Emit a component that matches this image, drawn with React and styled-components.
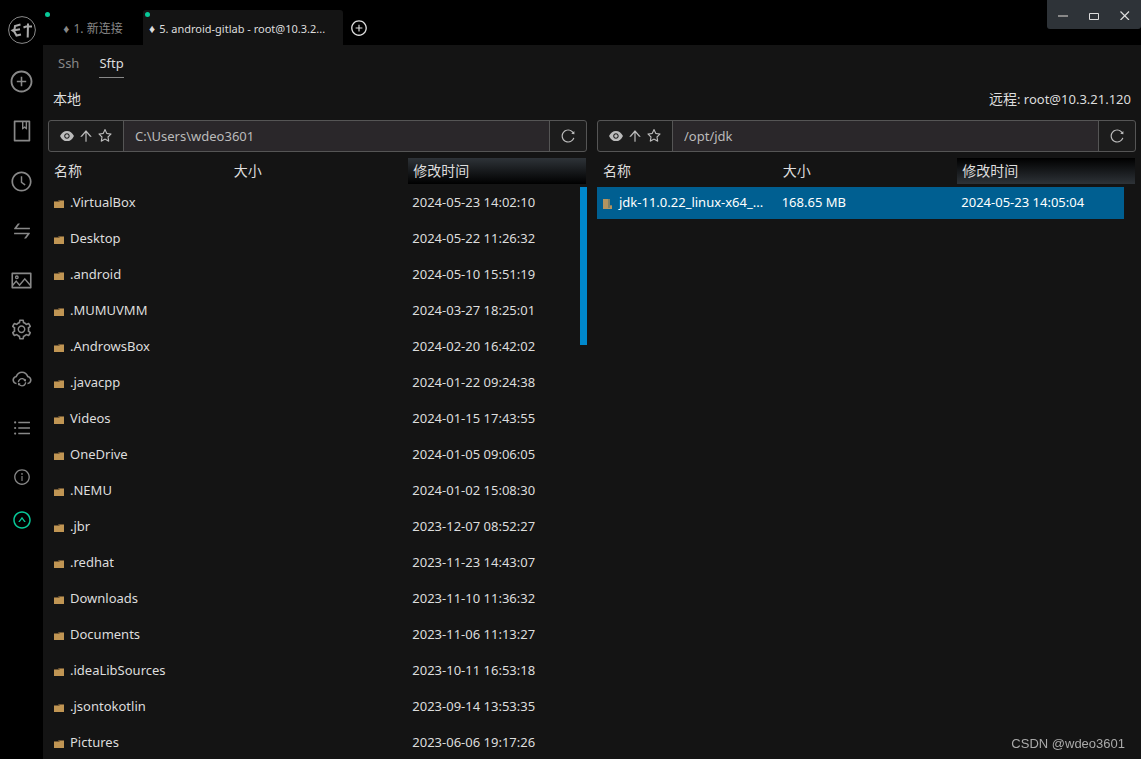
import React from 'react';
import styled, { createGlobalStyle } from 'styled-components';
import {
  AiFillEye,
  AiOutlineArrowUp,
  AiOutlineBook,
  AiOutlineClockCircle,
  AiOutlineCloudSync,
  AiOutlineInfoCircle,
  AiOutlinePicture,
  AiOutlinePlusCircle,
  AiOutlineReload,
  AiOutlineSetting,
  AiOutlineStar,
  AiOutlineSwap,
  AiOutlineUnorderedList,
  AiOutlineUpCircle,
} from 'react-icons/ai';

const GlobalStyle = createGlobalStyle`
  * {
    box-sizing: border-box;
  }

  body {
    margin: 0;
    background: #141414;
    color: #ddd;
    font-family: "Noto Sans", "Noto Sans CJK SC", sans-serif;
    font-size: 13px;
    line-height: 20px;
  }

  button,
  input {
    font: inherit;
    color: inherit;
  }
`;

const Shell = styled.div`
  display: flex;
  height: 100vh;
  overflow: hidden;
`;

const Sidebar = styled.nav`
  flex: none;
  width: 43px;
  display: flex;
  flex-direction: column;
  align-items: center;
  background: #000;
`;

const IconButton = styled.button`
  display: flex;
  align-items: center;
  justify-content: center;
  padding: 0;
  border: none;
  background: none;
  color: ${(props) => props.$color || '#bbb'};
  cursor: pointer;
`;

const LogoLink = styled.a`
  display: flex;
  height: 56px;
  padding-top: 16px;
  color: #888;
`;

const SideButton = styled(IconButton)`
  width: 43px;
  height: ${(props) => props.$height}px;
`;

const Main = styled.main`
  flex: 1;
  min-width: 0;
  display: flex;
  flex-direction: column;
`;

const TopBar = styled.header`
  flex: none;
  display: flex;
  align-items: flex-end;
  height: 45px;
  background: #000;
`;

const Tab = styled.button`
  position: relative;
  width: ${(props) => (props.$active ? 200 : 100)}px;
  height: 35px;
  padding: 2px 6px 0;
  border: none;
  border-radius: 3px 3px 0 0;
  background: ${(props) => (props.$active ? '#141414' : 'none')};
  color: ${(props) => (props.$active ? '#ddd' : '#888')};
  font-size: ${(props) => (props.$active ? 11 : 12)}px;
  text-align: ${(props) => (props.$active ? 'left' : 'center')};
  white-space: nowrap;
  cursor: pointer;
`;

const Diamond = styled.span`
  margin-right: 4px;
  font-family: "Liberation Sans", sans-serif;
  font-size: 12px;
`;

const StatusDot = styled.span`
  position: absolute;
  top: 2px;
  left: 2px;
  width: 5px;
  height: 5px;
  border-radius: 50%;
  background: #08c898;
`;

const AddTab = styled(IconButton)`
  width: 32px;
  height: 35px;
`;

const WindowControls = styled.div`
  display: flex;
  align-self: flex-start;
  margin-left: auto;
  padding-right: 1px;
  border-radius: 0 0 3px 3px;
  background: #2e3338;
`;

const WindowButton = styled(IconButton)`
  width: 31px;
  height: 29px;
`;

const SessionNav = styled.nav`
  display: flex;
  gap: 20px;
  padding: 8px 15px 10px;
`;

const SessionLink = styled.a`
  height: 25px;
  border-bottom: 1px solid ${(props) => (props.$active ? '#888' : 'transparent')};
  color: ${(props) => (props.$active ? '#ddd' : '#888')};
  text-decoration: none;
`;

const Panes = styled.div`
  flex: 1;
  min-height: 0;
  display: grid;
  grid-template-columns: 1fr 1fr;
  gap: 10px;
  padding: 0 5px;
`;

const Pane = styled.section`
  min-width: 0;
  min-height: 0;
  display: flex;
  flex-direction: column;
`;

const PaneTitle = styled.h2`
  height: 22px;
  margin: 0 0 10px;
  padding: 0 5px;
  font-size: 14px;
  font-weight: 400;
  line-height: 22px;
  text-align: ${(props) => props.$align || 'left'};
`;

const Host = styled.span`
  font-size: 13px;
`;

const AddressBar = styled.div`
  flex: none;
  display: flex;
  height: 32px;
  border: 1px solid #555;
  border-radius: 3px;
  background: #1c1c1c;
  overflow: hidden;
`;

const AddressActions = styled.div`
  display: flex;
  align-items: center;
  gap: 3px;
  padding: 0 10px;
`;

const AddressInput = styled.input`
  flex: 1;
  min-width: 0;
  padding: 0 11px;
  border: solid #555;
  border-width: 0 1px;
  background: #2a272a;
  color: #bbb;
  outline: none;
`;

const ReloadButton = styled(IconButton)`
  width: 36px;
`;

const FileTable = styled.table`
  display: block;
  margin-top: 6px;
`;

const FileHead = styled.thead`
  display: block;
`;

const HeadRow = styled.tr`
  display: grid;
  grid-template-columns: repeat(3, 1fr);
`;

const HeadCell = styled.th`
  height: 26px;
  padding: 0 5px;
  border: solid transparent;
  border-width: 0 1px;
  background: ${(props) => {
    if (props.$sorted === 'desc') return 'linear-gradient(#2e3338, #000)';
    if (props.$sorted === 'asc') return 'linear-gradient(#000, #2e3338)';
    return 'none';
  }};
  background-clip: padding-box;
  font-size: 14px;
  font-weight: 400;
  line-height: 26px;
  text-align: left;
`;

const FileBody = styled.tbody`
  position: relative;
  display: block;
  padding-top: 3px;
`;

const FileRow = styled.tr`
  display: grid;
  grid-template-columns: repeat(2, calc((100% + 12px) / 3)) 1fr;
  height: 32px;
  margin: 0 12px 4px 0;
  background: ${(props) => (props.$selected ? '#005f91' : 'none')};
  color: ${(props) => (props.$selected ? '#fff' : '#ddd')};
`;

const FileCell = styled.td`
  display: flex;
  align-items: center;
  gap: 5px;
  padding: 0 5px 2px;
  white-space: nowrap;

  svg {
    flex: none;
    margin-top: 4px;
  }
`;

const ScrollThumb = styled.tr`
  position: absolute;
  top: 3px;
  right: 0;
  width: 7px;
  height: 158px;
  background: #08c;
`;

const Watermark = styled.div`
  position: fixed;
  right: 16px;
  bottom: 5px;
  color: #aaa;
  font-family: "Liberation Sans", sans-serif;
`;

const Logo = () => (
  <svg width="28" height="28" viewBox="0 0 28 28" fill="none" stroke="currentColor" aria-hidden="true">
    <circle cx="14" cy="14" r="13.4" strokeWidth="1" />
    <path d="M12.500 8.500L7 10 6.500 13.500 4.500 14.500 6.500 16 8.500 19.500 13 18.500M6.500 14.200L12 13.200" strokeWidth="2" stroke="#aaa" />
    <path d="M20 7.500L19.700 21.500M15.500 11.500L18 10.500 24 10.500" strokeWidth="2" stroke="#aaa" />
  </svg>
);

const FolderIcon = () => (
  <svg width="12" height="12" viewBox="0 0 12 12" aria-hidden="true">
    <path d="M1 4h4l1-2h5v8H1z" fill="#c09553" />
    <path d="M1 3h4l1-1h5v1H7L6 4H1z" fill="#6f5633" />
  </svg>
);

const ArchiveIcon = () => (
  <svg width="12" height="12" viewBox="0 0 12 12" aria-hidden="true">
    <path d="M1 1h7v6h2v4H1z" fill="#b39460" />
    <path d="M6 1h2v6h2v1H8v2H6z" fill="#7f8068" />
  </svg>
);

const sideItems = [
  { label: '新建', Icon: AiOutlinePlusCircle, size: 25, height: 50 },
  { label: '书签', Icon: AiOutlineBook, size: 24, height: 50 },
  { label: '历史', Icon: AiOutlineClockCircle, size: 23, height: 50 },
  { label: '传输', Icon: AiOutlineSwap, size: 22, height: 50 },
  { label: '主题', Icon: AiOutlinePicture, size: 23 },
  { label: '设置', Icon: AiOutlineSetting, size: 23 },
  { label: '同步', Icon: AiOutlineCloudSync, size: 22 },
  { label: '批量', Icon: AiOutlineUnorderedList, size: 20 },
  { label: '关于', Icon: AiOutlineInfoCircle, size: 18 },
  { label: '升级', Icon: AiOutlineUpCircle, size: 20, height: 37, color: '#08c898' },
];

const localFiles = [
  { name: '.VirtualBox', time: '2024-05-23 14:02:10' },
  { name: 'Desktop', time: '2024-05-22 11:26:32' },
  { name: '.android', time: '2024-05-10 15:51:19' },
  { name: '.MUMUVMM', time: '2024-03-27 18:25:01' },
  { name: '.AndrowsBox', time: '2024-02-20 16:42:02' },
  { name: '.javacpp', time: '2024-01-22 09:24:38' },
  { name: 'Videos', time: '2024-01-15 17:43:55' },
  { name: 'OneDrive', time: '2024-01-05 09:06:05' },
  { name: '.NEMU', time: '2024-01-02 15:08:30' },
  { name: '.jbr', time: '2023-12-07 08:52:27' },
  { name: '.redhat', time: '2023-11-23 14:43:07' },
  { name: 'Downloads', time: '2023-11-10 11:36:32' },
  { name: 'Documents', time: '2023-11-06 11:13:27' },
  { name: '.ideaLibSources', time: '2023-10-11 16:53:18' },
  { name: '.jsontokotlin', time: '2023-09-14 13:53:35' },
  { name: 'Pictures', time: '2023-06-06 19:17:26' },
];

const remoteFiles = [
  {
    name: 'jdk-11.0.22_linux-x64_...',
    size: '168.65 MB',
    time: '2024-05-23 14:05:04',
    archive: true,
    selected: true,
  },
];

const FilePane = ({ title, host, align, path, files, sorted, scrollable }) => (
  <Pane>
    <PaneTitle $align={align}>
      {title}
      {host && <Host>: {host}</Host>}
    </PaneTitle>
    <AddressBar>
      <AddressActions>
        <IconButton aria-label="显示隐藏文件"><AiFillEye size={16} /></IconButton>
        <IconButton aria-label="上级目录"><AiOutlineArrowUp size={16} /></IconButton>
        <IconButton aria-label="收藏"><AiOutlineStar size={16} /></IconButton>
      </AddressActions>
      <AddressInput aria-label="路径" defaultValue={path} />
      <ReloadButton aria-label="刷新"><AiOutlineReload size={16} /></ReloadButton>
    </AddressBar>
    <FileTable>
      <FileHead>
        <HeadRow>
          <HeadCell>名称</HeadCell>
          <HeadCell>大小</HeadCell>
          <HeadCell $sorted={sorted}>修改时间</HeadCell>
        </HeadRow>
      </FileHead>
      <FileBody>
        {files.map((file) => (
          <FileRow key={file.name} $selected={file.selected}>
            <FileCell>
              {file.archive ? <ArchiveIcon /> : <FolderIcon />}
              {file.name}
            </FileCell>
            <FileCell>{file.size}</FileCell>
            <FileCell>{file.time}</FileCell>
          </FileRow>
        ))}
        {scrollable && <ScrollThumb aria-hidden="true" />}
      </FileBody>
    </FileTable>
  </Pane>
);

const App = () => (
  <>
    <GlobalStyle />
    <Shell>
      <Sidebar>
        <LogoLink href="#" aria-label="electerm"><Logo /></LogoLink>
        {sideItems.map(({ label, Icon, size, height, color }) => (
          <SideButton key={label} aria-label={label} $color={color || '#888'} $height={height || 49}>
            <Icon size={size} />
          </SideButton>
        ))}
      </Sidebar>
      <Main>
        <TopBar>
          <Tab>
            <StatusDot />
            <Diamond>♦</Diamond>
            1. 新连接
          </Tab>
          <Tab $active>
            <StatusDot />
            <Diamond>♦</Diamond>
            5. android-gitlab - root@10.3.2...
          </Tab>
          <AddTab aria-label="新标签" $color="#ddd"><AiOutlinePlusCircle size={18} /></AddTab>
          <WindowControls>
            <WindowButton aria-label="最小化">
              <svg width="10" height="10" viewBox="0 0 10 10"><path d="M0 5h10v2H0z" fill="#888" /></svg>
            </WindowButton>
            <WindowButton aria-label="最大化">
              <svg width="10" height="10" viewBox="0 0 10 10" fill="none" stroke="#ddd"><path d="M.5 3.500h9v6h-9z" /></svg>
            </WindowButton>
            <WindowButton aria-label="关闭">
              <svg width="10" height="10" viewBox="0 0 10 10" fill="none" stroke="#ddd" strokeWidth="1.200"><path d="M.5 1.500l8.500 8.500M9 1.500l-8.500 8.500" /></svg>
            </WindowButton>
          </WindowControls>
        </TopBar>
        <SessionNav>
          <SessionLink href="#ssh">Ssh</SessionLink>
          <SessionLink href="#sftp" $active>Sftp</SessionLink>
        </SessionNav>
        <Panes>
          <FilePane title="本地" path="C:\Users\wdeo3601" files={localFiles} sorted="desc" scrollable />
          <FilePane
            title="远程"
            host="root@10.3.21.120"
            align="right"
            path="/opt/jdk"
            files={remoteFiles}
            sorted="asc"
          />
        </Panes>
      </Main>
    </Shell>
    <Watermark>CSDN @wdeo3601</Watermark>
  </>
);

export default App;
